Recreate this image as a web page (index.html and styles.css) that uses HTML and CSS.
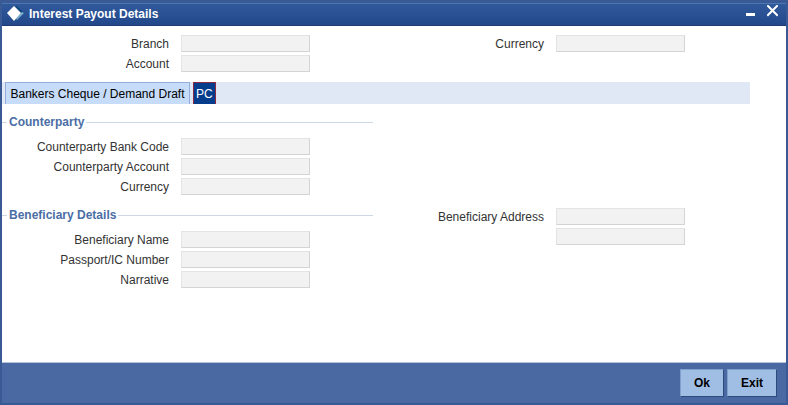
FILE: index.html
```html
<!DOCTYPE html>
<html lang="en">
<head>
    <meta charset="UTF-8">
    <meta name="viewport" content="width=device-width, initial-scale=1.0">
    <title>Interest Payout Details</title>
    <link rel="stylesheet" href="styles.css">
</head>
<body>

    <form class="window">
        <!-- Title bar -->
        <header class="titlebar">
            <svg class="logo" width="18" height="16" viewBox="0 0 18 16">
                <path d="M8 0H10L17 7L9 15L8 14L14 7Z" fill="#0d4a7c"/>
                <path d="M15 6L17 7L10 14L9 13Z" fill="#7fb2d0"/>
                <path d="M7 0L14 7L7 15L0 7Z" fill="#ffffff"/>
            </svg>
            <h1>Interest Payout Details</h1>
            <button type="button" class="window-button" aria-label="Minimize">
                <svg width="11" height="12" viewBox="0 0 11 12"><path d="M1 8H10V11H1Z" fill="#fff"/></svg>
            </button>
            <button type="button" class="window-button" aria-label="Close">
                <svg width="11" height="12" viewBox="0 0 11 12"><path d="M1 1L10 10M10 1L1 10" stroke="#fff" stroke-width="2" stroke-linecap="square"/></svg>
            </button>
        </header>

        <main class="content">
            <div class="columns">
                <div class="fields">
                    <label for="branch">Branch</label>
                    <input type="text" id="branch" readonly>
                    <label for="account">Account</label>
                    <input type="text" id="account" readonly>
                </div>
                <div class="fields">
                    <label for="currency">Currency</label>
                    <input type="text" id="currency" readonly>
                </div>
            </div>

            <nav class="tabs">
                <button type="button" class="tab">Bankers Cheque / Demand Draft</button>
                <button type="button" class="tab active">PC</button>
            </nav>

            <div class="columns">
                <fieldset>
                    <legend>Counterparty</legend>
                    <div class="fields">
                        <label for="cpBankCode">Counterparty Bank Code</label>
                        <input type="text" id="cpBankCode" readonly>
                        <label for="cpAccount">Counterparty Account</label>
                        <input type="text" id="cpAccount" readonly>
                        <label for="cpCurrency">Currency</label>
                        <input type="text" id="cpCurrency" readonly>
                    </div>
                </fieldset>
            </div>

            <div class="columns">
                <fieldset>
                    <legend>Beneficiary Details</legend>
                    <div class="fields">
                        <label for="benName">Beneficiary Name</label>
                        <input type="text" id="benName" readonly>
                        <label for="passport">Passport/IC Number</label>
                        <input type="text" id="passport" readonly>
                        <label for="narrative">Narrative</label>
                        <input type="text" id="narrative" readonly>
                    </div>
                </fieldset>
                <div class="fields">
                    <label for="address1">Beneficiary Address</label>
                    <input type="text" id="address1" readonly>
                    <input type="text" id="address2" class="no-label" aria-label="Beneficiary Address line 2" readonly>
                </div>
            </div>
        </main>

        <footer class="footer">
            <button type="button">Ok</button>
            <button type="button">Exit</button>
        </footer>
    </form>

</body>
</html>
```
FILE: styles.css
```css
* {
    box-sizing: border-box;
}

body {
    margin: 0;
    background: #ffffff;
    color: #333333;
    font-family: "Liberation Sans", Arial, sans-serif;
    font-size: 12px;
    line-height: 14px;
}

button,
input {
    font: inherit;
}

.window {
    display: flex;
    flex-direction: column;
    min-height: 100vh;
    border: 2px solid #395a94;
    border-top-width: 3px;
}

/* Title bar */
.titlebar {
    display: flex;
    align-items: center;
    height: 23px;
    padding: 1px 8px 3px 5px;
    border-top: 1px solid #4c77b3;
    border-bottom: 1px solid #1b3a74;
    background: linear-gradient(#30599c, #22488a);
    color: #ffffff;
}

.titlebar h1 {
    flex: 1;
    margin: 0 0 0 4px;
    font-size: 12px;
}

.window-button {
    display: flex;
    margin-left: 11px;
    padding: 0;
    border: none;
    background: none;
    align-self: flex-start;
}

.content {
    flex: 1;
    padding: 9px 36px 24px 0;
}

.columns {
    display: grid;
    grid-template-columns: 1fr 1fr;
    column-gap: 2px;
}

.fields {
    display: grid;
    grid-template-columns: 167px 129px;
    grid-auto-rows: 17px;
    column-gap: 12px;
    row-gap: 3px;
    align-content: start;
}

.fields label {
    line-height: 19px;
    text-align: right;
}

.fields input {
    width: 100%;
    height: 17px;
    padding: 0 2px;
    border: 1px solid #e4e4e4;
    border-right-color: #d4d4d4;
    border-bottom-color: #d4d4d4;
    background: #f2f2f2;
    outline: none;
}

.fields .no-label {
    grid-column: 2;
}

/* Tabs */
.tabs {
    display: flex;
    gap: 3px;
    height: 22px;
    margin: 10px 0 11px;
    padding-left: 3px;
    background: #e0e8f5;
}

.tab {
    padding: 0 2px;
    border: 1px solid #93aedb;
    border-bottom: none;
    background: #c6dcf8;
    color: #000000;
}

.tab:first-child {
    min-width: 185px;
}

.tab.active {
    border-color: #8c2a45;
    background: #063c8c;
    color: #ffffff;
}

fieldset {
    min-width: 0;
    margin: 0 2px 13px 0;
    padding: 9px 0 0;
    border: none;
    border-top: 1px solid #ccd6e4;
}

legend {
    margin-left: 5px;
    padding: 0 2px;
    color: #4a6ea5;
    font-weight: bold;
}

/* Button bar */
.footer {
    display: flex;
    justify-content: flex-end;
    gap: 3px;
    padding: 6px 9px 6px;
    border-top: 1px solid #b4c4de;
    background: #4a69a2;
}

.footer button {
    height: 28px;
    padding: 0 13px;
    border: 1px solid #7f9fcc;
    border-right-color: #2d4a7c;
    border-bottom-color: #2d4a7c;
    background: #a0bde4;
    color: #000000;
    font-weight: bold;
}
```
